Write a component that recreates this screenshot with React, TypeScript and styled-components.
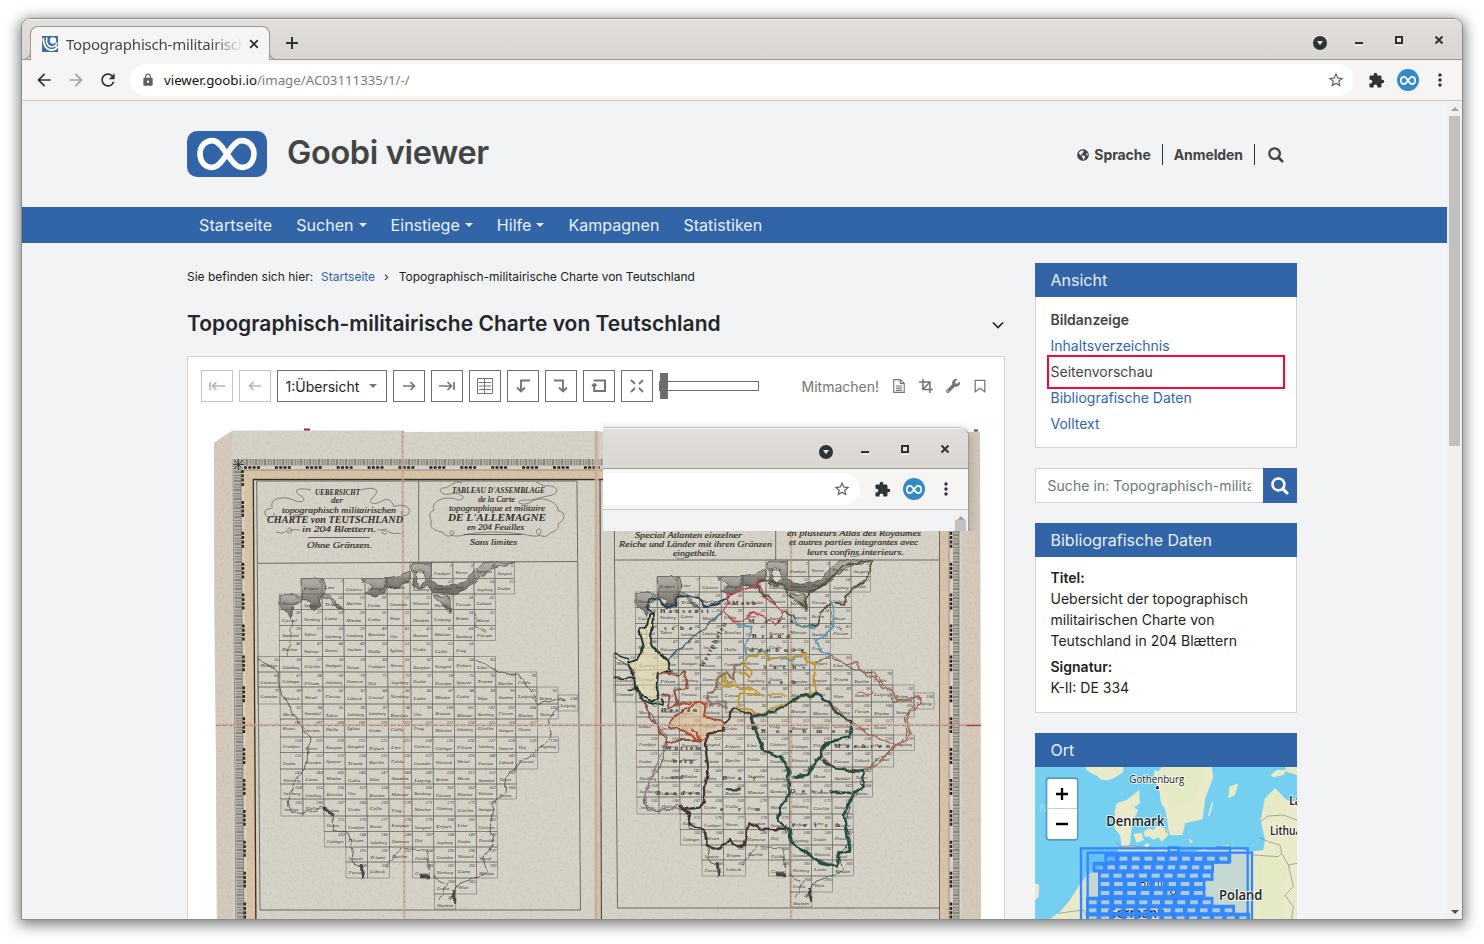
import React from 'react';
import styled, { createGlobalStyle, css } from 'styled-components';
import { MdArrowBack, MdArrowForward, MdRefresh, MdLock, MdStarBorder, MdExtension, MdMoreVert } from 'react-icons/md';
import { FaGlobeAmericas, FaWrench } from 'react-icons/fa';

const BLUE = '#3265a8';
const UI = '"Noto Sans", "Open Sans", sans-serif';

const Global = createGlobalStyle`
  *, *::before, *::after { box-sizing: border-box; }
  html, body { margin: 0; height: 944px; overflow: hidden; background: #fff; }
  body { font-family: Inter, "Liberation Sans", sans-serif; font-size: 14px; color: #222; }
  svg { display: block; flex: none; }
`;

/* ---------- browser window ---------- */

const Desktop = styled.div`
  width: 1484px;
  height: 944px;
  padding: 18px 21px;
  overflow: hidden;
`;

const windowFrame = css`
  border: 1px solid #8c8c8a;
  border-radius: 9px 9px 0 0;
  box-shadow: 0 3px 14px 2px rgba(0, 0, 0, 0.5);
  background: #f6f5f4;
  overflow: hidden;
`;

const Window = styled.div`
  ${windowFrame}
  width: 1442px;
  height: 902px;
  display: flex;
  flex-direction: column;
`;

const Strip = styled.div`
  height: 41px;
  flex: none;
  display: flex;
  align-items: flex-start;
  justify-content: flex-end;
  background: linear-gradient(#e1dedb, #dad6d2);
  border-bottom: 1px solid #9b9996;
  box-shadow: inset 0 1px #f7f6f5;
`;

const Tab = styled.div`
  position: relative;
  width: 240px;
  height: 34px;
  margin: 7px 0 0 8px;
  padding: 0 10px 0 11px;
  display: flex;
  align-items: center;
  border: 1px solid #9b9996;
  border-bottom: 0;
  border-radius: 8px 8px 0 0;
  background: #f6f5f4;
  &::before, &::after {
    content: '';
    position: absolute;
    bottom: 0;
    width: 9px;
    height: 9px;
    border-bottom: 1px solid #9b9996;
  }
  &::before { left: -9px; border-right: 1px solid #9b9996; border-bottom-right-radius: 8px; }
  &::after { right: -9px; border-left: 1px solid #9b9996; border-bottom-left-radius: 8px; }
`;

const TabTitle = styled.span`
  flex: none;
  width: 176px;
  margin: 0 7px 0 8px;
  overflow: hidden;
  white-space: nowrap;
  font: 15px/22px ${UI};
  letter-spacing: -0.2px;
  color: #45484a;
  -webkit-mask-image: linear-gradient(90deg, #000 145px, transparent 178px);
  mask-image: linear-gradient(90deg, #000 145px, transparent 178px);
`;

const NewTab = styled.div`
  margin: 17px auto 0 15px;
`;

const Controls = styled.div`
  display: flex;
  width: 150px;
  height: 40px;
`;

const Bar = styled.div`
  height: 41px;
  flex: none;
  display: flex;
  align-items: center;
  gap: 12px;
  padding: 0 12px;
  background: #f6f5f4;
  border-bottom: 1px solid #cbc5bc;
  color: #2e3436;
`;

const Omnibox = styled.div`
  flex: 1;
  min-width: 0;
  height: 32px;
  margin-right: 2px;
  padding: 0 9px 0 11px;
  display: flex;
  align-items: center;
  border-radius: 16px;
  background: #fff;
  color: #5c6164;
`;

const Url = styled.span`
  flex: 1;
  margin-left: 9px;
  font: 13.3px/20px ${UI};
  letter-spacing: -0.02px;
  color: #7b7b7b;
  white-space: nowrap;
  b { font-weight: 400; color: #111; }
`;

const Avatar = styled.div`
  width: 22px;
  height: 22px;
  margin-right: -1px;
  border-radius: 50%;
  background: #348ac7;
  display: flex;
  align-items: center;
  justify-content: center;
`;

const InfinityMark = ({ w, h, stroke }: { w: number; h: number; stroke: number }) => (
  <svg width={w} height={h} viewBox="0 0 60 34" preserveAspectRatio="none" fill="none" stroke="#fff">
    <path d="M30 17C24 8 20 3.6 15.500 3.600C8 3.600 3 9.500 3 17S8 30.400 15.500 30.400C20 30.400 24 26 30 17S40 3.600 44.500 3.600C52 3.600 57 9.500 57 17S52 30.400 44.500 30.400C40 30.400 36 26 30 17Z" strokeWidth={stroke} />
  </svg>
);

const WindowControls = () => (
  <Controls>
    <svg width="150" height="40" viewBox="0 0 150 40">
      <circle cx="8" cy="24" r="7" fill="#2e3436" />
      <path d="M5 22h6l-3 4.200z" fill="#e6e3e0" />
      <path d="M43 26.500h8M83 26.500h8" stroke="#f5f4f2" />
      <path d="M43 24h8" stroke="#2e3436" strokeWidth="2" />
      <rect x="84" y="18" width="6" height="6" fill="#eceae8" stroke="#2e3436" strokeWidth="2" />
      <path d="M123.500 17.500l7 7M130.500 17.500l-7 7" stroke="#2e3436" strokeWidth="2" />
    </svg>
  </Controls>
);

const ToolbarEnd = () => (
  <>
    <MdExtension size={17} />
    <Avatar><InfinityMark w={16} h={9} stroke={6.5} /></Avatar>
    <MdMoreVert size={20} />
  </>
);

/* ---------- page ---------- */

const Viewport = styled.div`
  flex: 1;
  min-height: 0;
  display: flex;
  overflow: hidden;
`;

const Page = styled.div`
  flex: 1;
  background: #f1f3f5;
  overflow: hidden;
`;

const Scrollbar = styled.div`
  width: 15px;
  display: flex;
  flex-direction: column;
  align-items: center;
  justify-content: space-between;
  background: #f0f0f0;
`;

const Thumb = styled.div`
  width: 11px;
  height: 330px;
  margin-bottom: auto;
  background: #c1c1c1;
`;

const Arrow = styled.div<{ $down?: boolean }>`
  height: 15px;
  padding-top: 6px;
  &::before {
    content: '';
    display: block;
    border: 4px solid transparent;
    ${p => (p.$down ? 'border-top-color: #505050; border-bottom: 0;' : 'border-bottom-color: #a3a3a3; border-top: 0;')}
  }
`;

const Header = styled.header`
  height: 106px;
  padding: 0 152px 0 165px;
  display: flex;
  align-items: center;
`;

const Logo = styled.div`
  width: 80px;
  height: 46px;
  border-radius: 10px;
  background: ${BLUE};
  display: flex;
  align-items: center;
  justify-content: center;
`;

const SiteTitle = styled.div`
  margin: -2px auto 0 20px;
  font-size: 32.5px;
  font-weight: 600;
  line-height: 46px;
  letter-spacing: -0.35px;
  color: #444;
`;

const UserLink = styled.a`
  display: flex;
  align-items: center;
  gap: 5px;
  height: 21px;
  padding: 0 11px;
  font-weight: 700;
  letter-spacing: -0.08px;
  color: #444;
  & + & { border-left: 1px solid #333; }
  &:last-child { padding-left: 13px; }
`;

const UserLinks = styled.nav`
  display: flex;
  margin-top: 1px;
`;

const Nav = styled.nav`
  height: 36px;
  padding-left: 165px;
  display: flex;
  background: ${BLUE};
`;

const NavItem = styled.a<{ $menu?: boolean }>`
  padding: 0 12px;
  display: flex;
  align-items: center;
  font-size: 16px;
  letter-spacing: 0.03px;
  color: #e9f0f8;
  &:first-child { letter-spacing: 0.13px; }
  ${p => p.$menu && css`
    &::after {
      content: '';
      margin-left: 5px;
      border: 4px solid transparent;
      border-top-color: currentColor;
      border-bottom: 0;
    }
  `}
`;

const Columns = styled.div`
  display: flex;
  gap: 30px;
  padding: 20px 0 0 165px;
`;

const Main = styled.main`
  width: 818px;
`;

const Crumbs = styled.div`
  height: 27px;
  display: flex;
  align-items: center;
  font-size: 12px;
  a { margin: 0 9px 0 8px; color: ${BLUE}; }
  i { font-style: normal; margin-right: 10px; }
`;

const TitleRow = styled.div`
  height: 66px;
  display: flex;
  align-items: center;
  justify-content: space-between;
  padding: 2px 0 0;
  svg { margin: 1px -1px 0 0; }
`;

const PageTitle = styled.h1`
  margin: 0;
  font-size: 21px;
  font-weight: 600;
  line-height: 28px;
  letter-spacing: 0.02px;
  color: #24262b;
`;

const Viewer = styled.section`
  position: relative;
  height: 600px;
  border: 1px solid #d3d4d5;
  background: #fff;
`;

const Tools = styled.div`
  display: flex;
  align-items: center;
  gap: 6px;
  height: 32px;
  margin: 13px 17px 11px 13px;
`;

const Tool = styled.button<{ $off?: boolean; $wide?: boolean }>`
  width: ${p => (p.$wide ? 110 : 32)}px;
  height: 32px;
  padding: 0 ${p => (p.$wide ? 9 : 0)}px 0 ${p => (p.$wide ? 7.5 : 0)}px;
  display: flex;
  align-items: center;
  justify-content: ${p => (p.$wide ? 'space-between' : 'center')};
  border: 1px solid ${p => (p.$off ? '#c4c4c4' : '#6c6c6c')};
  background: #fff;
  color: ${p => (p.$wide ? '#222' : p.$off ? '#b5b5b5' : '#757575')};
  font: 14px Inter, sans-serif;
`;

const Caret = styled.span`
  border: 4px solid transparent;
  border-top-color: #777;
  border-bottom: 0;
`;

const Slider = styled.div`
  width: 100px;
  height: 10px;
  margin: 0 auto 0 0;
  display: flex;
  align-items: center;
  border: 1px solid #6c6c6c;
  &::before {
    content: '';
    width: 8px;
    height: 26px;
    background: #6c6c6c;
  }
`;

const Actions = styled.div`
  display: flex;
  align-items: center;
  gap: 13px;
  color: #757575;
`;

const Glyph = ({ d, size = 16, w = 1.4 }: { d: string; size?: number; w?: number }) => (
  <svg width={size} height={size} viewBox="0 0 16 16" fill="none" stroke="currentColor" strokeWidth={w}>
    <path d={d} />
  </svg>
);

/* second browser window lying over the scanned sheet */
const Floating = styled.div`
  position: absolute;
  left: 415px;
  top: 56px;
  width: 390px;
  height: 118px;
  overflow: hidden;
`;

const FloatingWindow = styled.div`
  ${windowFrame}
  border-color: #c3c2c0 #9d9b98 #9d9b98;
  box-shadow: 0 3px 12px 0 rgba(0, 0, 0, 0.22);
  width: 566px;
  height: 150px;
  margin: 14px 0 0 -200px;
`;

const FloatingPage = styled.div`
  height: 60px;
  display: flex;
  background: #f1f3f5;
  ${Scrollbar} { margin-left: auto; }
`;

const Aside = styled.aside`
  width: 262px;
`;

const Panel = styled.section`
  margin-bottom: 20px;
`;

const PanelHead = styled.h2`
  height: 34px;
  margin: 0;
  padding: 0 15.5px;
  font-size: 16px;
  font-weight: 400;
  line-height: 34px;
  color: #e9f0f8;
  background: ${BLUE};
`;

const PanelBody = styled.div<{ $h: number }>`
  height: ${p => p.$h}px;
  border: 1px solid #d1d5d9;
  border-top: 0;
  background: #fff;
`;

const ViewList = styled.div`
  display: flex;
  flex-direction: column;
  padding: 10px 12px 0 12px;
`;

const ViewItem = styled.a<{ $kind?: 'current' | 'marked' }>`
  height: 26px;
  padding-left: 2.5px;
  line-height: 26px;
  color: ${p => (p.$kind ? '#444' : BLUE)};
  ${p => p.$kind === 'current' && 'font-weight: 600;'}
  ${p => p.$kind === 'marked' && css`
    height: 34px;
    margin: -4px -1px;
    padding-left: 1.5px;
    border: 2px solid #f5063c;
    line-height: 30px;
  `}
`;

const Search = styled.div`
  display: flex;
  height: 35px;
  margin-bottom: 20px;
`;

const Field = styled.div`
  width: 228px;
  padding: 0 12px 0 11.5px;
  border: 1px solid #ced4da;
  border-right: 0;
  background: #fff;
  line-height: 34px;
  color: #6c757d;
  letter-spacing: 0.05px;
  span { display: block; overflow: hidden; white-space: nowrap; }
`;

const SearchButton = styled.div`
  width: 34px;
  display: flex;
  align-items: center;
  justify-content: center;
  background: ${BLUE};
  color: #fff;
`;

const Facts = styled.dl`
  margin: 0;
  padding: 10px 15px 0 14.5px;
  line-height: 21px;
  dt { font-weight: 600; color: #222; }
  dd { margin: 0 0 5px; }
`;

/* ---------- scanned map sheet ---------- */

const colX = [258, 280, 302, 323, 344.5, 366, 388, 411, 432.5, 454, 475, 496, 515.5, 537, 558, 579];
const rowY = [562, 578.5, 594, 609.7, 625.3, 640.3, 656.3, 672, 687, 704, 719, 737, 752.7, 769, 784, 799, 816, 831.7, 847, 862, 878, 894, 909];
const rows: [number, number][][] = [
  [[7, 12]], [[2, 12]], [[1, 11]], [[1, 11]], [[1, 11]], [[1, 10]], [[0, 11]], [[0, 13]], [[0, 14]], [[1, 14]], [[1, 13]],
  [[1, 14]], [[1, 13]], [[1, 12]], [[1, 12]], [[1, 11]], [[3, 11]], [[3, 11]], [[4, 11]], [[4, 6], [7, 11]], [[8, 10]], [[8, 9]],
];
const places = ['Husum', 'Bremen', 'Lübeck', 'Güstrow', 'Anclam', 'Stettin', 'Emden', 'Oldenburg', 'Lüneburg', 'Wittstock', 'Stargard', 'Rheine', 'Minden', 'Hannover', 'Celle', 'Stendal', 'Berlin', 'Frankfurt', 'Münster', 'Cassel', 'Göttingen', 'Halle', 'Leipzig', 'Dresden', 'Görlitz', 'Breslau', 'Wesel', 'Erfurt', 'Weimar', 'Gotha', 'Hof', 'Prag', 'Tabor', 'Fulda', 'Worms', 'Bamberg', 'Nürnberg', 'Pilsen', 'Iglau', 'Brünn', 'Speyer', 'Stuttgart', 'Ulm', 'Passau', 'Linz', 'Krems', 'Wien', 'Augsburg', 'München', 'Salzburg', 'Gmunden', 'Kempten', 'Füssen', 'Lienz', 'Judenburg', 'Grätz', 'Meran', 'Trient'];

const boxes: { x: number; y: number; w: number; h: number; n: number }[] = [];
rows.forEach((spans, r) => spans.forEach(([a, b]) => {
  for (let c = a; c < b; c++) {
    const lean = (r - 8) * 0.14;
    boxes.push({ x: colX[c] + lean, y: rowY[r], w: colX[c + 1] - colX[c], h: rowY[r + 1] - rowY[r], n: boxes.length + 1 });
  }
}));
boxes.push({ x: 558, y: 695, w: 20, h: 16, n: 104 });

const SheetGrid = () => (
  <g>
    <g transform="translate(200 420) scale(.33333)" fill="url(#sea)" stroke="#3a3733" strokeWidth="2" filter="url(#rough)">
      <path d="M304 476L370 476L378 500L372 525L355 540L360 560L345 572L330 560L330 545L304 540Z" />
      <path d="M240 524L300 524L310 545L290 548L278 560L276 585L270 597L262 580L240 565Z" />
      <path d="M486 476L560 476L555 515L530 530L497 520L515 505Z" />
      <path d="M560 476L600 470L628 450L628 485L600 500L560 505Z" />
      <path d="M630 428L694 428L694 480L720 500L770 495L800 480L824 450L850 428L944 428L880 445L845 470L815 500L750 525L700 520L680 495L660 505L645 500Z" />
      <path d="M700 530L750 530L752 575L735 560Z" />
      <path d="M368 524Q400 530 410 550L433 570L405 556Q388 535 368 530Z" />
      <path d="M652 458L672 452L676 478L662 500L646 486Z" fill="#d9d7cb" />
    </g>
    <g fill="none" stroke="#6e6961" strokeWidth=".55">
      {boxes.map((b, i) => <rect key={i} x={b.x} y={b.y} width={b.w} height={b.h} />)}
    </g>
    <g fontFamily='"Liberation Serif", serif' fontStyle="italic" fill="#3a342f">
      {boxes.map((b, i) => {
        const name = places[(i * 17) % places.length];
        return (
          <React.Fragment key={i}>
            <text x={b.x + 2.500} y={b.y + 10.500 + ((i * 5) % 3)} fontSize="5" textLength={Math.min(b.w - 5, name.length * 2.500)} lengthAdjust="spacingAndGlyphs">{name}</text>
            <text x={b.x + b.w - 1} y={b.y + 4.500} fontSize="4.600" textAnchor="end">{b.n}</text>
          </React.Fragment>
        );
      })}
    </g>
    <g transform="translate(200 670) scale(.33333)" fill="none" stroke="#4a443e" strokeWidth="2.500" filter="url(#rough)">
      <path d="M173 -36L228 0L240 60L275 120L310 180L330 200L325 260L310 300L280 340L265 400L275 430L330 425L370 415L400 435L400 480L445 490L460 540L455 580L480 590" />
      <path d="M830 -30L885 0L920 15L950 10L985 55L1015 100L1050 95L1075 85L1100 90M1075 110L1045 150L1055 200L1010 240L950 290L920 320L915 370L880 400L870 480L880 520L850 560L862 610L780 640L750 690" />
      <path d="M372 415L402 438M484 585L488 625M660 620L690 620M764 660V704" strokeWidth="9" />
      <path d="M275 -150L272 -90L260 -40M830 -170L825 -130L860 -110M560 590L600 535L680 540L690 600M700 620L740 640L720 690" strokeWidth="2" />
    </g>
  </g>
);

const borders: [string, string, number, string?][] = [
  ['M178 255L192 252L180 320L190 350L235 395L242 425L203 430L200 470L208 505L180 512L150 490L135 470L132 430L115 395L140 385L160 345L148 300L172 285Z', '#1e3329', 6, '#e8dcae'],
  ['M73 372L115 387M73 445H130M110 475L135 475L160 515L215 528L218 508', '#1e3329', 5],
  ['M185 250L172 225L178 208L210 212L230 235L258 228L262 200L295 198L330 210L345 228L375 225L400 212L420 195', '#24414f', 6],
  ['M398 245L232 390', '#4e6974', 5],
  ['M410 190L440 190L460 178L500 170L505 150L520 195L540 215L575 240L570 270L555 285L515 260L490 245L460 275L430 275L400 240L418 220Z', '#bd4658', 5],
  ['M505 155L540 150L575 165L600 200L645 230L655 190L720 150L760 105L850 92L835 120L830 150L800 170L765 200L760 225L735 220M505 160L510 190L540 200L560 225M580 245L610 255L620 285L650 290L685 285L690 250L720 220', '#4e4f35', 5],
  ['M440 285L485 290L475 330L465 350L470 385L500 375L515 355L530 365L535 390L570 385L600 390L640 375M718 210L730 240L730 290L700 318L680 330L690 360L725 380L680 395M610 270L630 290L680 292', '#5b9ab8', 6],
  ['M470 385L500 375L525 365L535 390L570 382L600 385L645 370L650 400L682 400L670 440L680 490L650 492L600 515L560 530L500 555L485 540L440 530L450 490L510 495L500 480L440 470L390 465L380 445L410 430L400 455L440 460L430 430L460 425L480 440L485 425L450 400Z', '#c1982f', 6],
  ['M350 490L375 480L385 450L410 430L430 450L440 405L470 400M350 490L360 530L385 520L410 535L405 515L380 510', '#89706c', 6],
  ['M680 395L725 380L780 405L800 395L820 430L850 440L880 475L910 485L920 515L960 510L985 500L998 522L960 545L950 570L960 610L930 645L870 630L830 605L780 575L745 540L715 520L680 490', '#a66a57', 5],
  ['M915 645L880 690L825 722L740 715L695 680L705 640L735 630', '#a07050', 5],
  ['M205 430L270 435L285 425L290 475L255 480L265 520L235 535L235 500L215 490M160 515L180 560L205 595L230 625L230 650M230 640L260 630L330 630', '#8f4e41', 6],
  ['M240 570L320 512L350 525L345 560L405 578L400 605L355 615L330 635L290 605L240 590ZM250 530L300 515M300 600L325 605L330 630', '#a94a33', 6, '#dec39a'],
  ['M230 650L190 720L165 790L165 830L205 840L275 835', '#91838a', 5],
  ['M400 600L355 615L345 640L355 720L345 770L345 820L325 830L275 835L300 850L295 885L345 900L350 945L380 958L405 945L420 930L440 950L465 945L475 880L510 895L590 900M400 600L410 570L430 535L480 550L490 600', '#40322f', 7],
  ['M487 560L550 545L600 520L640 492L665 498L680 488L715 520L740 550L785 575L780 620L735 628L700 650L690 680L650 735L610 740M487 560L495 600L520 660L570 680L598 720L595 800L570 830L565 870L598 900L605 940L640 960L690 1000L740 1010L745 970L780 960L770 900L765 850L790 790L820 770L820 725L740 718L695 690', '#234a3f', 8],
  ['M407 778H455M722 786H785', '#2b4636', 7],
  ['M535 492H590', '#c9a030', 5],
  ['M800 490H850', '#c66', 4],
];

const captions: [string, number, number, number, number, boolean?][] = [
  ['UEBERSICHT', 315, 494.5, 45, 7.5, true],
  ['der', 331, 503, 12, 8],
  ['topographisch militairischen', 282, 512.5, 114, 8.5],
  ['CHARTE von TEUTSCHLAND', 267, 523, 136, 9.5, true],
  ['in 204 Blættern.', 302, 532, 74, 8.5],
  ['Ohne Gränzen.', 307, 547.5, 65, 8.5],
  ["TABLEAU D'ASSEMBLAGE", 452, 493, 93, 7.5, true],
  ['de la Carte', 478, 502, 37, 8],
  ['topographique et militaire', 449, 510.5, 96, 8.5],
  ["DE L'ALLEMAGNE", 448, 520.5, 98, 10, true],
  ['en 204 Feuilles', 467, 529.5, 57, 8.5],
  ['Sans limites', 470, 545, 47, 8.5],
  ['Special Atlanten einzelner', 635, 538, 107, 8.5],
  ['Reiche und Länder mit ihren Gränzen', 619, 547, 153, 8.5],
  ['eingetheilt.', 673, 555.5, 44, 8.5],
  ['en plusieurs Atlas des Royaumes', 787, 536, 134, 8.5],
  ['et autres parties integrantes avec', 789, 545, 129, 8.5],
  ['leurs confins interieurs.', 807, 554.5, 97, 8.5],
];

const regions: [string, number, number, number][] = [
  ['Hanseati-', 660, 613, 54], ['sche', 664, 630, 28], ['Brand', 752, 638, 38], ['denburg', 750, 652, 54], ['Meck', 732, 605, 24], ['Mark', 748, 623, 46],
  ['Sachs', 763, 669, 42], ['sen', 768, 684, 28], ['Hessen', 661, 712, 36], ['Boehmen', 761, 733, 88], ['Maehren', 834, 748, 56], ['Würtem', 665, 750, 36],
  ['berg', 673, 763, 20], ['und', 671, 779, 12], ['Baaden', 656, 795, 44], ['Bay', 722, 780, 34], ['ern', 720, 811, 40], ['Oestr', 790, 793, 42], ['reich', 792, 827, 48],
];

const OldMap = () => (
  <svg width="816" height="530" viewBox="188 413 816 530">
    <defs>
      <linearGradient id="sea" x1="0" y1="0" x2="0" y2="1">
        <stop offset="0" stopColor="#9b9990" stopOpacity=".6" />
        <stop offset="1" stopColor="#55524c" stopOpacity=".85" />
      </linearGradient>
      <filter id="rough" x="-5%" y="-5%" width="110%" height="110%" colorInterpolationFilters="sRGB">
        <feTurbulence type="fractalNoise" baseFrequency=".045" numOctaves="1" seed="4" />
        <feDisplacementMap in="SourceGraphic" scale="20" xChannelSelector="R" yChannelSelector="G" />
      </filter>
      <filter id="grain" x="0" y="0" width="100%" height="100%">
        <feTurbulence type="fractalNoise" baseFrequency=".4" numOctaves="3" seed="8" />
        <feColorMatrix values="0 0 0 0 .3  0 0 0 0 .27  0 0 0 0 .2  0 0 0 1.200 -.58" />
        <feComposite in2="SourceGraphic" operator="in" />
      </filter>
      <pattern id="ticksH" width="9" height="7" patternUnits="userSpaceOnUse">
        <rect width="9" height="7" fill="#b5b1a6" /><path d="M1 0V7M3.500 0V7M4.500 0V7M7.500 0V7" stroke="#77736a" strokeWidth=".7" />
      </pattern>
      <pattern id="ticksV" width="7" height="9" patternUnits="userSpaceOnUse">
        <rect width="7" height="9" fill="#b5b1a6" /><path d="M0 1H7M0 3.500H7M0 4.500H7M0 7.500H7" stroke="#77736a" strokeWidth=".7" />
      </pattern>
    </defs>
    <path d="M214 443L221 438L233 430.500H402L406 432L594 431L604 432H980L981 943H217L216 760L214 600Z" fill="#d5d3c9" />
    <path d="M214 443L221 438L232 431L233 943H217L216 760Z" fill="#d3c5b8" opacity=".75" />
    <path d="M962 432H980L981 943H962Z" fill="#d6c3b4" opacity=".6" />
    <path d="M304 429.500H310M974 430.500H978" stroke="#8e2f2c" strokeWidth="1.800" fill="none" />
    {/* graduated frame */}
    <path d="M234 459H959V465.500H234Z" fill="url(#ticksH)" />
    <path d="M234 466L241 466L244 943H237Z" fill="url(#ticksV)" />
    <path d="M953 466H959V943H953Z" fill="url(#ticksV)" />
    <path d="M244 467.500H950" stroke="#28231f" strokeWidth="2.600" strokeDasharray="3 1.300 3 1.300 3 1.300 3 15" />
    <path d="M242.500 470L245 943M951 470V943" stroke="#28231f" strokeWidth="2.600" strokeDasharray="3 1.300 3 1.300 3 1.300 3 15" />
    <path d="M244 470H948V478H254L257 943H247Z" fill="#dac3a4" />
    <path d="M940 470H948V943H940Z" fill="#d9c2aa" />
    <path d="M234 460L243 469M243 460L234 469M238.500 459V470M233 464.500H244" stroke="#38322d" strokeWidth=".9" />
    <path d="M256 943L253.300 479.500H603" fill="none" stroke="#312c27" strokeWidth="1.300" />
    <path d="M233 459L236 943M241 469L244 943M244 470H950M949 470V943M959 460V943" fill="none" stroke="#666158" strokeWidth=".6" />
    <path d="M260 910L256.700 481H577L580.500 910ZM418.700 481V561.500M258 563.300L577 561.500" fill="none" stroke="#554e46" strokeWidth=".8" />
    <path d="M614.500 531V560L939 560M614.500 560L617.500 908H940M775.700 531V560M939.500 531V943" fill="none" stroke="#554e46" strokeWidth=".8" />
    <path d="M594.500 431H599L601 943H594.500Z" fill="#d2bba4" opacity=".75" />
    <path d="M600 479L601.500 943" stroke="#4c423b" strokeWidth="1.100" />
    <path d="M402.500 431L404.500 943M596 431V943M791 531V943" stroke="#c9a896" strokeWidth="2.400" opacity=".7" />
    <path d="M402.500 431L404.500 943M791 531V943" stroke="#a27c68" strokeWidth=".8" strokeDasharray="2 3 1 4" opacity=".8" />
    <SheetGrid />
    <g transform="translate(356 -2)"><SheetGrid /></g>
    <g transform="translate(590 530) scale(.33333)" filter="url(#rough)" strokeLinejoin="round">
      {borders.map(([d, stroke, w, fill], i) => (
        <path key={i} d={d} stroke={stroke} strokeWidth={w} fill={fill || 'none'} fillOpacity=".65" />
      ))}
    </g>
    <path d="M216 725H981" stroke="#cba592" strokeWidth="2.400" opacity=".75" />
    <path d="M216 725.500H981" stroke="#9a6150" strokeWidth=".8" strokeDasharray="2 1 1 3" opacity=".8" />
    <path d="M967 725.500H981" stroke="#983f3a" strokeWidth="1.200" />
    {/* pen flourishes round the titles */}
    <g fill="none" stroke="#5a544c" strokeWidth=".65">
      <path d="M311 490c-12-3-20 0-10 6c6 4 2 7-5 5c-12-6-26-3-24 5c2 5-9 0-7 8c2 6 14 2 8-1M361 490c14-4 20 0 12 7c-6 6 0 9 9 4c8-4 10 1 12 6c6-4 18-1 15 6c-3 5-10 2-7-2M276 532c8 3 10-1 13-4c3-2 4 7-1 5c-3-2 5-4 12-3M377 530c10-2 12 6 7 4c-5-3 2-8 5-2c6 3 8 0 12 2" />
      <path d="M462 483c-8-4-12 6-20 5c-4 2 0 8 8 6c12-3 18 6 8 6c-14-6-28 3-24 10c-8 4-2 8-3 13c-2 6 8 9 12 9c2 8 16 2 9-1c-5 0-2 8 12 4c20-5 50-3 69 1c9 2 10-8 5-7c-4 2 0 9 9 7c2-4 14-5 11-12c8-4 8-13 0-13c1-8-14-16-26-10c-8 7-20 0-8-1c12 1 15-3 24-4c14-2 10-12-4-10l-8-4" />
      <path d="M308 537.500H370M464 534.500H522" strokeWidth=".9" />
      <path d="M296 517c-6-2 1-3 4-1M675 557c4 3 8 2 12-1M850 556c6 2 8-1 13-2" />
    </g>
    <g fontFamily='"Liberation Serif", serif' fontStyle="italic" fill="#332d28">
      {captions.map(([t, x, y, len, size, bold], i) => (
        <text key={i} x={x} y={y} textLength={len} fontSize={size} fontWeight={bold ? 700 : 400} stroke="#332d28" strokeWidth={bold ? 0 : 0.2} lengthAdjust="spacingAndGlyphs">{t}</text>
      ))}
    </g>
    <g fontFamily='"Liberation Serif", serif' fontWeight="700" fontSize="7" fill="#3a342f">
      {regions.map(([t, x, y, len], i) => <text key={i} x={x} y={y} textLength={len}>{t}</text>)}
      <text transform="translate(703 668) rotate(-62)" textLength="50">Westphalen</text>
    </g>
    <path d="M214 443L233 430.500H980L981 943H217Z" fill="#fff" filter="url(#grain)" opacity=".4" />
  </svg>
);

/* ---------- location map ---------- */

const sheetRows: [number, number, number][] = [
  [416, 255, 630], [442, 220, 582], [467, 236, 580], [492, 236, 556], [519, 236, 556], [547, 200, 580], [571, 200, 645], [595, 200, 690],
];

const PlaceMap = () => (
  <svg width="262" height="152" viewBox="45 141 786 456">
    <rect x="45" y="141" width="786" height="456" fill="#75cff0" />
    <g fill="#e9eac9">
      <path d="M195 141C205 165 235 160 240 178C265 188 290 170 310 155V141Z" />
      <path d="M425 141L415 155L405 150L400 170L415 200C425 225 415 245 432 262C445 290 440 320 450 346L488 345L495 310L548 298L556 235L580 170L575 141Z" />
      <path d="M285 270L290 250L320 240L357 210L360 250L342 262L355 270L345 290L335 320L330 375L305 378L300 345L283 325Z" />
      <path d="M370 335L385 325L400 330L410 318L425 322L440 325L445 345L425 365L415 352L400 360L390 350L375 350ZM340 342L365 338L372 360L350 368ZM625 235L628 200L655 190L645 225ZM752 165L770 150L800 150L790 165L760 172ZM564 285L576 245L580 250L568 290ZM505 355L520 365L512 370ZM795 141H831V165L800 155ZM374 372L388 370L386 380L374 380Z" />
      <path d="M45 490L58 495L56 530L45 540ZM90 597L120 575L150 540L175 500L200 465L250 440L290 415L295 380L340 378L400 390L440 380L500 400L560 385L620 375L690 395L730 390L735 360L722 300L735 235L765 205L800 240L831 245V597Z" />
    </g>
    <path d="M430 141L440 230L455 270L520 240L560 141ZM735 240L765 215L800 260L790 290L735 290ZM710 410L800 415L790 597H720Z" fill="#dfe9bd" opacity=".5" />
    <g fill="none" stroke="#85858a" strokeWidth="2">
      <path d="M722 305L745 288L790 285L831 300M718 352L745 365L780 375L785 400L775 410L700 405M785 400L805 435L831 430M805 435L820 500L795 525L820 560L815 597M290 365L300 380L340 378L370 382M435 320L440 340M115 580L150 575L190 570L200 590" />
    </g>
    <g fill="#3388ff" fillOpacity=".1" stroke="#3388ff" strokeWidth="7">
      <rect x="183" y="385" width="500" height="240" />
      <rect x="203" y="398" width="493" height="240" />
    </g>
    <g fontFamily='"Open Sans", sans-serif' fontWeight="600" fill="#222" stroke="#fff" strokeOpacity=".75" strokeWidth="6" paintOrder="stroke">
      <text x="328" y="189" fontSize="32" fontWeight="400" textLength="165" lengthAdjust="spacingAndGlyphs">Gothenburg</text>
      <text x="259" y="317" fontSize="43" textLength="174" lengthAdjust="spacingAndGlyphs">Denmark</text>
      <text x="807" y="254" fontSize="36" textLength="90">Latvia</text>
      <text x="750" y="345" fontSize="35" textLength="140" lengthAdjust="spacingAndGlyphs">Lithuania</text>
      <text x="597" y="540" fontSize="43" textLength="130" lengthAdjust="spacingAndGlyphs">Poland</text>
      <text x="262" y="595" fontSize="42" textLength="170" lengthAdjust="spacingAndGlyphs">Germany</text>
      <text x="358" y="502" fontSize="32" fontWeight="400" textLength="90">Berlin</text>
      <circle cx="412" cy="203" r="5" />
    </g>
    <text x="58" y="277" fontFamily='"Open Sans", sans-serif' fontStyle="italic" fontSize="34" fill="#a9e0f8">N</text>
    <circle cx="460" cy="516" r="8" fill="none" stroke="#333" strokeWidth="3" />
    <g fill="#3388ff" fillOpacity=".16" stroke="#3388ff" strokeWidth="8">
      {sheetRows.map(([y, a, b]) => Array.from({ length: Math.round((b - a) / 38) }, (_, i) => {
        const step = (b - a) / Math.round((b - a) / 38);
        return <rect key={`${y}-${i}`} x={a + i * step + 2} y={y - 10} width={step - 6} height="20" />;
      }))}
    </g>
    <g fill="none" stroke="#3388ff" strokeWidth="7">
      {sheetRows.map(([y, a, b]) => <path key={y} d={`M${a} ${y - 13}H${b}M${a} ${y + 12}H${b}`} />)}
      <path d="M446 382H476V396H446ZM560 386H630V396M588 382H630V430" />
    </g>
    {/* zoom control */}
    <rect x="77" y="172" width="98" height="190" rx="10" fill="#000" fillOpacity=".25" />
    <rect x="82" y="177" width="89" height="180" rx="6" fill="#fff" />
    <path d="M82 265.500H171" stroke="#ccc" strokeWidth="3" />
    <path d="M108 222H144M126 204V240M108 312H144" stroke="#000" strokeWidth="7" />
  </svg>
);

const SearchGlyph = ({ size }: { size: number }) => (
  <svg width={size} height={size} viewBox="0 0 16 16" fill="none" stroke="currentColor">
    <circle cx="6.600" cy="6.600" r="5.300" strokeWidth="2.300" />
    <path d="M10.500 10.500L14.200 14.200" strokeWidth="2.700" strokeLinecap="round" />
  </svg>
);

export default function App() {
  return (
    <Desktop>
      <Global />
      <Window>
        <Strip>
          <Tab>
            <svg width="16" height="16" viewBox="0 0 16 16">
              <rect width="16" height="16" fill="#3f6ca3" />
              <circle cx="11" cy="4.500" r="3.200" fill="#fff" />
              <path d="M5 1.500C3.500 6 5.500 10.800 10 10.800C12.500 10.800 14.500 9 15 6.500" fill="none" stroke="#fff" strokeWidth="1.500" />
              <path d="M1.500 2C.8 8 4 14 9.500 14C12.500 14 14.500 12.500 15.500 10" fill="none" stroke="#fff" strokeWidth="1.900" />
            </svg>
            <TabTitle>Topographisch-militairische Charte</TabTitle>
            <svg width="10" height="10" viewBox="0 0 10 10" stroke="#2e3436" strokeWidth="1.900"><path d="M1.200 1.200l7.600 7.600M8.800 1.200l-7.600 7.600" /></svg>
          </Tab>
          <NewTab><svg width="14" height="14" viewBox="0 0 14 14" stroke="#2e3436" strokeWidth="2"><path d="M7 1v12M1 7h12" /></svg></NewTab>
          <WindowControls />
        </Strip>
        <Bar>
          <MdArrowBack size={20} />
          <MdArrowForward size={20} color="#a3a3a2" />
          <MdRefresh size={20} />
          <Omnibox>
            <MdLock size={14} />
            <Url><b>viewer.goobi.io</b>/image/AC03111335/1/-/</Url>
            <MdStarBorder size={18} />
          </Omnibox>
          <ToolbarEnd />
        </Bar>
        <Viewport>
          <Page>
            <Header>
              <Logo><InfinityMark w={60} h={34} stroke={5.6} /></Logo>
              <SiteTitle>Goobi viewer</SiteTitle>
              <UserLinks>
                <UserLink><FaGlobeAmericas size={12} />Sprache</UserLink>
                <UserLink>Anmelden</UserLink>
                <UserLink><SearchGlyph size={16} /></UserLink>
              </UserLinks>
            </Header>
            <Nav>
              <NavItem>Startseite</NavItem>
              <NavItem $menu>Suchen</NavItem>
              <NavItem $menu>Einstiege</NavItem>
              <NavItem $menu>Hilfe</NavItem>
              <NavItem>Kampagnen</NavItem>
              <NavItem>Statistiken</NavItem>
            </Nav>
            <Columns>
              <Main>
                <Crumbs>Sie befinden sich hier:<a>Startseite</a><i>›</i>Topographisch-militairische Charte von Teutschland</Crumbs>
                <TitleRow>
                  <PageTitle>Topographisch-militairische Charte von Teutschland</PageTitle>
                  <Glyph d="M3 5.500L8 10.500L13 5.500" w={1.7} />
                </TitleRow>
                <Viewer>
                  <Tools>
                    <Tool $off><Glyph d="M1 4V12M3.500 8H16M7.500 4L3.500 8L7.500 12" w={1.7} /></Tool>
                    <Tool $off><Glyph d="M2.500 8H14M6.500 4L2.500 8L6.500 12" w={1.7} /></Tool>
                    <Tool $wide>1:Übersicht<Caret /></Tool>
                    <Tool><Glyph d="M2 8H13.500M9.500 4L13.500 8L9.500 12" w={1.7} /></Tool>
                    <Tool><Glyph d="M15 4V12M0 8H12.500M8.500 4L12.500 8L8.500 12" w={1.7} /></Tool>
                    <Tool><Glyph d="M.5 .5H15.500V15.500H.5ZM7.500 .5V15.500M2 4.500H14M2 8H14M2 11.500H14" w={1} /></Tool>
                    <Tool><Glyph d="M15 2.500H6V13M2 9.500L6 13.500L10 9.500" w={1.9} /></Tool>
                    <Tool><Glyph d="M1 2.500H10V13M6 9.500L10 13.500L14 9.500" w={1.9} /></Tool>
                    <Tool><Glyph d="M2.500 2.500H14V13H3.200V6.500M1 8L3.200 6L5.400 8" w={2} /></Tool>
                    <Tool><Glyph d="M2 2L6 6M14 2L10 6M2 14L6 10M14 14L10 10" w={1.9} /></Tool>
                    <Slider />
                    <Actions>
                      <span>Mitmachen!</span>
                      <Glyph size={14} d="M2 .7H9.500L14 5V15.300H2ZM9.500 .7V5H14M4.500 8H11.500M4.500 10.500H11.500M4.500 13H11.500" w={1.3} />
                      <Glyph size={14} d="M4.500 0V12H16M0 3.500H12.500V16M5 11.500L12 4" w={1.8} />
                      <FaWrench size={14} />
                      <Glyph size={14} d="M2.500 1.500H13.500V14.500L8 10.500L2.500 14.500Z" w={1.4} />
                    </Actions>
                  </Tools>
                  <OldMap />
                  <Floating>
                    <FloatingWindow>
                      <Strip><WindowControls /></Strip>
                      <Bar>
                        <Omnibox><Url /><MdStarBorder size={18} /></Omnibox>
                        <ToolbarEnd />
                      </Bar>
                      <FloatingPage><Scrollbar><Arrow /><Thumb /></Scrollbar></FloatingPage>
                    </FloatingWindow>
                  </Floating>
                </Viewer>
              </Main>
              <Aside>
                <Panel>
                  <PanelHead>Ansicht</PanelHead>
                  <PanelBody $h={151}>
                    <ViewList>
                      <ViewItem $kind="current">Bildanzeige</ViewItem>
                      <ViewItem>Inhaltsverzeichnis</ViewItem>
                      <ViewItem $kind="marked">Seitenvorschau</ViewItem>
                      <ViewItem>Bibliografische Daten</ViewItem>
                      <ViewItem>Volltext</ViewItem>
                    </ViewList>
                  </PanelBody>
                </Panel>
                <Search>
                  <Field><span>Suche in: Topographisch-militairische</span></Field>
                  <SearchButton><SearchGlyph size={18} /></SearchButton>
                </Search>
                <Panel>
                  <PanelHead>Bibliografische Daten</PanelHead>
                  <PanelBody $h={156}>
                    <Facts>
                      <dt>Titel:</dt>
                      <dd>Uebersicht der topographisch militairischen Charte von Teutschland in 204 Blættern</dd>
                      <dt>Signatur:</dt>
                      <dd>K-II: DE 334</dd>
                    </Facts>
                  </PanelBody>
                </Panel>
                <Panel>
                  <PanelHead>Ort</PanelHead>
                  <PlaceMap />
                </Panel>
              </Aside>
            </Columns>
          </Page>
          <Scrollbar><Arrow /><Thumb /><Arrow $down /></Scrollbar>
        </Viewport>
      </Window>
    </Desktop>
  );
}
